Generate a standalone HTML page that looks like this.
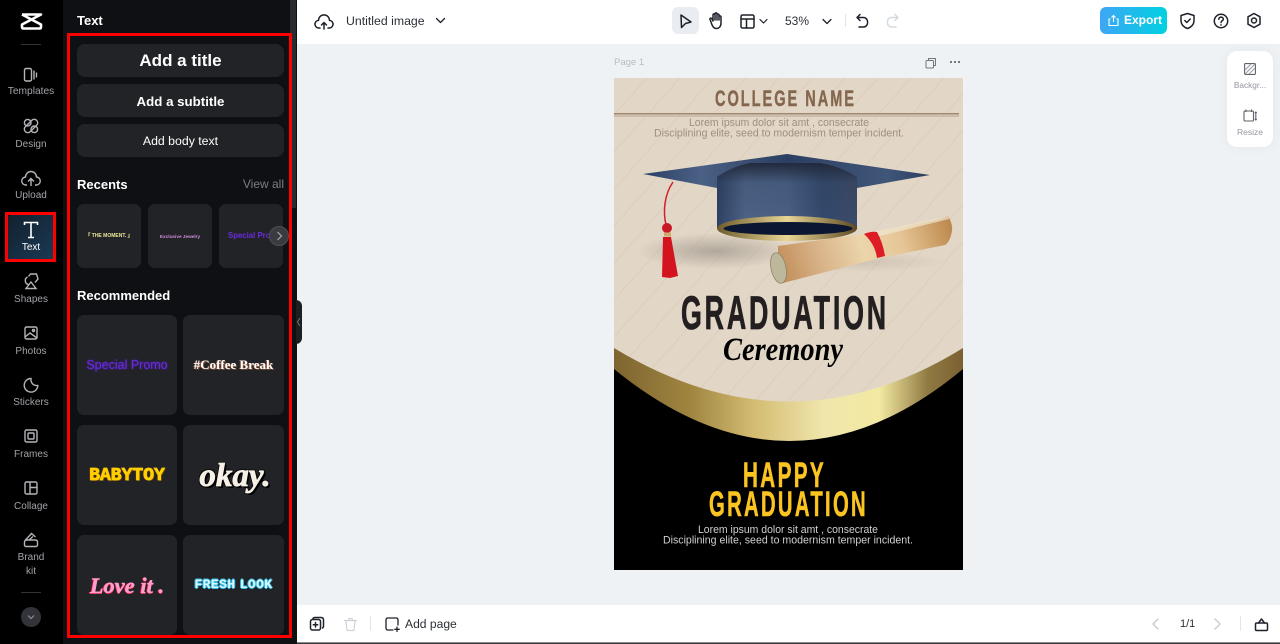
<!DOCTYPE html>
<html><head><meta charset="utf-8"><style>
*{box-sizing:border-box}
html,body{margin:0;padding:0;width:1280px;height:644px;overflow:hidden;background:#eff2f5;font-family:"Liberation Sans",sans-serif}
.a{position:absolute}
#nav{left:0;top:0;width:63px;height:644px;background:#000}
#panel{left:63px;top:0;width:234px;height:644px;background:#0f1013}
.lb{position:absolute;left:0;width:62px;text-align:center;font-size:10px;line-height:13px;color:#a2a3a8}
.ic{position:absolute;left:20px;width:22px;height:22px;fill:none;stroke:#b4b5ba;stroke-width:1.4}
.btn{position:absolute;left:77px;width:207px;height:33px;background:#222327;border-radius:8px;color:#fff;text-align:center;line-height:33px}
.card{position:absolute;background:#222327;border-radius:7px;overflow:hidden;text-align:center;white-space:nowrap}
.h{position:absolute;left:77px;color:#fff;font-weight:bold;font-size:13px;line-height:16px}
.ti{position:absolute;fill:none;stroke:#1d2129;stroke-width:1.5;stroke-linecap:round;stroke-linejoin:round}
</style></head><body>
<div class="a" style="left:0;top:0;width:1280px;height:44px;background:#fff"></div>
<div class="a" style="left:297px;top:605px;width:983px;height:37px;background:#fff"></div>
<div class="a" style="left:0;top:643px;width:1280px;height:1px;background:#3a3a3c"></div>
<div class="a" style="left:297px;top:642px;width:983px;height:1px;background:#8a8a8c"></div>

<div class="a" id="nav">
<svg class="a" style="left:20px;top:12px" width="23" height="19" viewBox="0 0 23 19" fill="none" stroke="#fff" stroke-width="2.6" stroke-linejoin="round"><path d="M2 2.500H21L2 12.500V15Q2 16.500 3.500 16.500H19.500Q21 16.500 21 15V12.500L2 2.500"/></svg>
<div class="a" style="left:21px;top:44px;width:20px;height:1px;background:#333"></div>

<svg class="ic" style="top:64px" viewBox="0 0 22 22"><rect x="4.500" y="4.500" width="7" height="12.500" rx="1.500"/><path d="M14 6.500v9M16.500 8.500v5"/></svg>
<div class="lb" style="top:85px;font-size:10.200px">Templates</div>
<svg class="ic" style="top:115px" viewBox="0 0 22 22"><circle cx="7.700" cy="7.700" r="3.300"/><circle cx="14.300" cy="14.300" r="3.300"/><rect x="3" y="7.500" width="16" height="7" rx="3.500" transform="rotate(-45 11 11)"/></svg>
<div class="lb" style="top:138px">Design</div>
<svg class="ic" style="top:168px" viewBox="0 0 22 22"><path d="M7 17H6a4 4 0 0 1-.5-8 5.500 5.500 0 0 1 11 0 4 4 0 0 1-.5 8h-1M11 18v-7M8 13.500L11 10.500l3 3"/></svg>
<div class="lb" style="top:189px">Upload</div>

<div class="a" style="left:8px;top:215px;width:46px;height:45px;background:linear-gradient(135deg,#13202e,#1a3a55);border-radius:2px"></div>
<svg class="ic" style="top:219px;stroke:#fff;stroke-width:1.600" viewBox="0 0 22 22"><path d="M4.500 6V3.500H17.500V6M11 3.500V18.500M8 18.500H14"/></svg>
<div class="lb" style="top:241px;color:#fff;font-weight:normal">Text</div>
<div class="a" style="left:5px;top:212px;width:51px;height:50px;border:3px solid #f00"></div>

<svg class="ic" style="top:270px" viewBox="0 0 22 22"><path d="M11 12L16 18.500H6Z"/><path d="M8.500 14.500A4 4 0 0 1 7.500 7M8.500 6.500L10.500 4H16.500L18 9L15 12.500"/></svg>
<div class="lb" style="top:293px">Shapes</div>
<svg class="ic" style="top:322px" viewBox="0 0 22 22"><rect x="5" y="5" width="12" height="12" rx="1.500"/><circle cx="13.500" cy="8.500" r="1"/><path d="M5 15L10 11L17 16"/></svg>
<div class="lb" style="top:345px">Photos</div>
<svg class="ic" style="top:374px" viewBox="0 0 22 22"><path d="M11 4.500A6.800 6.800 0 1 0 17.800 11.500C13.500 12 10.500 9 11 4.500Z"/></svg>
<div class="lb" style="top:396px">Stickers</div>
<svg class="ic" style="top:425px" viewBox="0 0 22 22"><rect x="5" y="5" width="12" height="12" rx="1.500"/><rect x="8" y="8" width="6" height="6" rx="1"/></svg>
<div class="lb" style="top:448px">Frames</div>
<svg class="ic" style="top:477px" viewBox="0 0 22 22"><rect x="5" y="5" width="12" height="12" rx="1.500"/><path d="M10 5V17M10 10.500H17"/></svg>
<div class="lb" style="top:500px">Collage</div>
<svg class="ic" style="top:529px" viewBox="0 0 22 22"><path d="M4.500 13A2 2 0 0 1 6.500 11H16A2 2 0 0 1 17.500 13V16A1.500 1.500 0 0 1 16 17.500H6A1.500 1.500 0 0 1 4.500 16ZM5 11.500L11.500 4.500L15.500 8M9 11L13 7.500"/></svg>
<div class="lb" style="top:551px">Brand</div>
<div class="lb" style="top:565px">kit</div>
<div class="a" style="left:21px;top:592px;width:20px;height:1px;background:#333"></div>
<div class="a" style="left:21px;top:607px;width:20px;height:20px;border-radius:50%;background:#33343a"></div>
<svg class="a" style="left:27px;top:614px" width="8" height="6" fill="none" stroke="#8d8e94" stroke-width="1.200"><path d="M1 1.500L4 4.500L7 1.500"/></svg>
</div>

<div class="a" id="panel"></div>
<div class="a" style="left:290px;top:0;width:6px;height:208px;background:#2a2b2e"></div>
<div class="a" style="left:296px;top:300px;width:6px;height:44px;background:#1d1e21;border-radius:0 6px 6px 0"></div>
<svg class="a" style="left:296px;top:316px" width="6" height="12" fill="none" stroke="#777" stroke-width="1"><path d="M4 2L1.500 6L4 10"/></svg>

<div class="h" style="top:13px">Text</div>
<div class="btn" style="top:44px;font-size:17px;font-weight:bold">Add a title</div>
<div class="btn" style="top:84px;font-size:13.300px;font-weight:bold;padding-top:1px">Add a subtitle</div>
<div class="btn" style="top:124px;font-size:12.300px;padding-top:1px">Add body text</div>
<div class="h" style="top:177px">Recents</div>
<div class="a" style="left:224px;width:60px;top:177px;text-align:right;font-size:12px;line-height:15px;color:#7c7d82">View all</div>

<div class="card" style="left:77px;top:204px;width:64px;height:64px;font-size:5px;font-weight:bold;line-height:65px;color:#e8e89a">『 THE MOMENT. 』</div>
<div class="card" style="left:148px;top:204px;width:64px;height:64px;font-size:4.700px;font-weight:bold;line-height:65px;color:#d08ae0">Exclusive Jewelry</div>
<div class="card" style="left:219px;top:204px;width:64px;height:64px;font-size:7.800px;font-weight:bold;line-height:64px;color:#6a2be0;text-align:left;padding-left:9px">Special Promo</div>
<div class="a" style="left:269px;top:226px;width:20px;height:20px;border-radius:50%;background:#3a3b40;border:1px solid #4d4e52"></div>
<svg class="a" style="left:276px;top:231px" width="7" height="10" fill="none" stroke="#a8a9ad" stroke-width="1.200"><path d="M1.500 1L5.500 5L1.500 9"/></svg>

<div class="h" style="top:288px">Recommended</div>
<div class="card" style="left:77px;top:315px;width:100px;height:100px;line-height:100px;font-size:12.500px;color:#6a2be0;text-shadow:0 0 2px #5a22c8">Special Promo</div>
<div class="card" style="left:183px;top:315px;width:101px;height:100px;line-height:100px;font-family:'Liberation Serif',serif;font-weight:bold;font-size:13px;color:#fff;text-shadow:1px 1px 0 #7a4a35,-1px 0 0 #7a4a35">#Coffee Break</div>
<div class="card" style="left:77px;top:425px;width:100px;height:100px;line-height:102px;font-family:'Liberation Mono',monospace;font-weight:bold;font-size:18px;letter-spacing:0;color:#ffcf00;text-shadow:-1px 0 0 #6b3c10,1px 1px 0 #6b3c10;-webkit-text-stroke:.8px #ffcf00">BABYTOY</div>
<div class="card" style="left:183px;top:425px;width:101px;height:100px;line-height:102px;padding-left:3px;font-family:'Liberation Serif',serif;font-style:italic;font-weight:bold;font-size:33px;color:#f6efe6;-webkit-text-stroke:.8px #f6efe6;text-shadow:1px 1px 0 #000,-1px -1px 0 #000,2px 2px 0 #000,-1px 1px 0 #000,1px -1px 0 #000">okay.</div>
<div class="card" style="left:77px;top:535px;width:100px;height:100px;line-height:101px;font-family:'Liberation Serif',serif;font-style:italic;font-weight:bold;font-size:22.500px;color:#ff9dd0;-webkit-text-stroke:.4px #ff9dd0;text-shadow:-1px 0 0 #e0203a,0 1px 0 #e0203a">Love it .</div>
<div class="card" style="left:183px;top:535px;width:101px;height:100px;line-height:100px;font-family:'Liberation Mono',monospace;font-weight:bold;font-size:13px;letter-spacing:.4px;word-spacing:-4px;color:#d8f6fd;text-shadow:1px 0 0 #35bde6,-1px 0 0 #35bde6,0 1px 0 #35bde6,0 -1px 0 #35bde6">FRESH LOOK</div>

<div class="a" style="left:67px;top:33px;width:225px;height:605px;border:3px solid #f00"></div>

<svg class="ti" style="left:313px;top:11px" width="22" height="22" viewBox="0 0 22 22" stroke-width="1.400"><path d="M7 17H6a3.800 3.800 0 0 1-.5-7.600 5.500 5.500 0 0 1 11 0 3.800 3.800 0 0 1-.5 7.600h-1M11 18v-6M8.500 14L11 11.500l2.500 2.500"/></svg>
<div class="a" style="left:346px;top:13px;font-size:12.300px;line-height:16px;color:#2b2f36">Untitled image</div>
<svg class="ti" style="left:435px;top:17px;stroke-width:1.300" width="11" height="8"><path d="M1.500 1.500L5.500 5.500L9.500 1.500"/></svg>

<div class="a" style="left:672px;top:7px;width:27px;height:27px;background:#e9edf1;border-radius:6px"></div>
<svg class="ti" style="left:677px;top:12px" width="17" height="18" viewBox="0 0 17 18"><path d="M4 3L14 10L8.500 11.500L4.500 15.500Z"/></svg>
<svg class="ti" style="left:707px;top:11px" width="18" height="20" viewBox="0 0 18 20" stroke-width="1.300"><path d="M4 11L3 8.500C2.500 7 4.500 6.500 5 8L6 10V4C6 2.500 8 2.500 8 4V3C8 1.500 10 1.500 10 3V4C10 2.800 12 2.800 12 4V5.500C12 4.500 14 4.500 14 6V12C14 15.500 12 17.500 9.500 17.500C7 17.500 5.500 16 4 11ZM8 4V9M10 3.500V9M12 5V9"/></svg>
<svg class="ti" style="left:740px;top:14px" width="15" height="15" viewBox="0 0 15 15"><rect x="1" y="1" width="13" height="13" rx="1.500"/><path d="M1 5H14M6.500 5V14"/></svg>
<svg class="ti" style="left:759px;top:18px;stroke-width:1.200" width="9" height="7"><path d="M1 1.500L4.500 5L8 1.500"/></svg>
<div class="a" style="left:785px;top:13px;font-size:12px;line-height:16px;color:#2b2f36">53%</div>
<svg class="ti" style="left:822px;top:18px;stroke-width:1.300" width="10" height="7"><path d="M1 1.500L5 5.500L9 1.500"/></svg>
<div class="a" style="left:845px;top:14px;width:1px;height:13px;background:#e1e4e8"></div>
<svg class="ti" style="left:855px;top:13px" width="15" height="16" viewBox="0 0 15 16"><path d="M5 1.500L2 4.500L5 7.500M2.500 4.500H8.500C14 4.500 14 14 8.500 14H4"/></svg>
<svg class="ti" style="left:885px;top:13px;stroke:#d5dadf" width="15" height="16" viewBox="0 0 15 16"><path d="M10 1.500L13 4.500L10 7.500M12.500 4.500H6.500C1 4.500 1 14 6.500 14H11"/></svg>

<div class="a" style="left:1100px;top:7px;width:67px;height:27px;border-radius:6px;background:linear-gradient(90deg,#3ea6f6,#00d1e0);color:#fff;font-weight:bold;font-size:12px;line-height:27px;padding-left:24px">Export</div>
<svg class="a" style="left:1107px;top:14px" width="13" height="13" viewBox="0 0 13 13" fill="none" stroke="#fff" stroke-width="1.100"><path d="M3.500 5H2V11.500H11V5H9.500M6.500 8V1.500M4.500 3.500L6.500 1.500L8.500 3.500"/></svg>
<svg class="ti" style="left:1179px;top:12px" width="17" height="18" viewBox="0 0 17 18"><path d="M8.500 1.500L15 3.500V8.500C15 12.500 12 15.500 8.500 16.500C5 15.500 2 12.500 2 8.500V3.500ZM5.800 8.500L7.800 10.500L11.300 7"/></svg>
<svg class="ti" style="left:1213px;top:13px" width="16" height="16" viewBox="0 0 16 16"><circle cx="8" cy="8" r="6.700"/><path d="M5.800 6.200C5.800 3.500 10.300 3.500 10.300 6.200C10.300 7.800 8 7.800 8 9.500M8 11.700V12"/></svg>
<svg class="ti" style="left:1246px;top:12px" width="16" height="18" viewBox="0 0 16 18"><path d="M8 1.500L14 4.800V12.200L8 15.500L2 12.200V4.800Z"/><circle cx="8" cy="8.500" r="2.500"/></svg>

<div class="a" style="left:614px;top:56px;font-size:9.500px;line-height:13px;color:#b7bcc4">Page 1</div>
<svg class="ti" style="left:925px;top:57px;stroke:#70757e;stroke-width:1" width="12" height="12" viewBox="0 0 12 12"><rect x="1" y="3.500" width="7.500" height="7.500" rx="1"/><path d="M3.500 3.500V1.500H10.500V8.500H8.500"/></svg>
<div class="a" style="left:950px;top:61px;width:2px;height:2px;background:#70757e;box-shadow:4px 0 #70757e,8px 0 #70757e"></div>

<div class="a" style="left:1227px;top:51px;width:46px;height:96px;background:#fff;border-radius:10px;box-shadow:0 0 12px rgba(0,0,0,.05)"></div>
<svg class="a" style="left:1244px;top:63px" width="12" height="12" viewBox="0 0 12 12" fill="none" stroke="#5e626c" stroke-width="1.100"><rect x=".6" y=".6" width="10.800" height="10.800" rx="1"/><path d="M1 7L7 1M1 11L11 1M5 11L11 5" stroke="#9a9da5"/></svg>
<div class="a" style="left:1227px;top:80px;width:46px;text-align:center;font-size:8.300px;line-height:11px;color:#92969e">Backgr...</div>
<svg class="a" style="left:1243px;top:109px" width="14" height="14" viewBox="0 0 14 14" fill="none" stroke="#5e626c" stroke-width="1.100"><rect x="1" y="2" width="9.500" height="10" rx="1"/><path d="M3 .5V3M8.500 .5V3M12.800 3V11M11.800 4L12.800 3L13.800 4M11.800 10L12.800 11L13.800 10"/></svg>
<div class="a" style="left:1227px;top:127px;width:46px;text-align:center;font-size:8.500px;line-height:11px;color:#92969e">Resize</div>

<svg class="a" style="left:614px;top:78px" width="349" height="492" viewBox="614 78 349 492">
<defs>
<pattern id="dl" width="33" height="37" patternUnits="userSpaceOnUse" x="614" y="78"><path d="M0 37L33 0" stroke="#dcccb9" stroke-width=".8"/></pattern>
<linearGradient id="gold" x1="0" x2="1" y1="0" y2="0"><stop offset="0" stop-color="#7e6530"/><stop offset=".22" stop-color="#a08540"/><stop offset=".4" stop-color="#d3bc72"/><stop offset=".6" stop-color="#f0e6ac"/><stop offset=".76" stop-color="#f3e9a2"/><stop offset=".9" stop-color="#8f7a42"/><stop offset="1" stop-color="#7b6032"/></linearGradient>
<linearGradient id="sk" x1="0" x2="1" y1="0" y2="0"><stop offset="0" stop-color="#2e4163"/><stop offset=".2" stop-color="#4d6488"/><stop offset=".5" stop-color="#4a6186"/><stop offset=".75" stop-color="#334a6e"/><stop offset="1" stop-color="#3d4b68"/></linearGradient>
<linearGradient id="sktop" x1="0" x2="0" y1="0" y2="1"><stop offset="0" stop-color="#22293c"/><stop offset=".3" stop-color="#22293c" stop-opacity=".15"/><stop offset="1" stop-color="#22293c" stop-opacity="0"/></linearGradient>
<linearGradient id="bd" x1="0" x2="1" y1="0" y2="0"><stop offset="0" stop-color="#2b4064"/><stop offset=".2" stop-color="#4a6084"/><stop offset=".5" stop-color="#2b3f62"/><stop offset=".85" stop-color="#405678"/><stop offset="1" stop-color="#2a3d60"/></linearGradient>
<linearGradient id="rg" x1="0" x2="1" y1="0" y2="0"><stop offset="0" stop-color="#6f5c2c"/><stop offset=".5" stop-color="#e8d595"/><stop offset="1" stop-color="#5d4a22"/></linearGradient>
<linearGradient id="sc" x1="778" y1="280" x2="950" y2="225" gradientUnits="userSpaceOnUse"><stop offset="0" stop-color="#bf8a54"/><stop offset=".25" stop-color="#d8b288"/><stop offset=".5" stop-color="#ecd5ab"/><stop offset=".72" stop-color="#e6c596"/><stop offset="1" stop-color="#bd8a4e"/></linearGradient>
<radialGradient id="sh"><stop offset="0" stop-color="#8f8a80" stop-opacity=".6"/><stop offset="1" stop-color="#8f8a80" stop-opacity="0"/></radialGradient>
</defs>
<rect x="614" y="78" width="349" height="492" fill="#e2d6c6"/>
<rect x="614" y="78" width="349" height="340" fill="url(#dl)"/>
<text x="715" y="106" font-family="Liberation Sans Narrow,Liberation Sans,sans-serif" font-weight="bold" font-size="22" fill="#85674f" stroke="#85674f" stroke-width=".4" letter-spacing="3" textLength="141" lengthAdjust="spacingAndGlyphs">COLLEGE NAME</text>
<rect x="614" y="113" width="345" height="1.500" fill="#a08670"/><rect x="614" y="115.500" width="345" height="1" fill="#b8a18c"/>
<text x="689" y="126" font-family="Liberation Sans,sans-serif" font-size="11.300" fill="#a08e7e" textLength="180" lengthAdjust="spacingAndGlyphs">Lorem ipsum dolor sit amt , consecrate</text>
<text x="654" y="136.500" font-family="Liberation Sans,sans-serif" font-size="11.300" fill="#a08e7e" textLength="250" lengthAdjust="spacingAndGlyphs">Disciplining elite, seed to modernism temper incident.</text>

<ellipse cx="715" cy="251" rx="78" ry="18" fill="url(#sh)"/>
<ellipse cx="860" cy="262" rx="85" ry="10" fill="url(#sh)" opacity=".4"/>
<path d="M643 174L787 154L930 175L857 188H717Z" fill="url(#bd)"/>
<path d="M673 182C664 195 663 212 666 225" fill="none" stroke="#d0202a" stroke-width="1.500"/>
<path d="M717 177Q733 166 750 163H820Q840 166 857 177V229H717Z" fill="url(#sk)"/>
<path d="M717 177Q733 166 750 163H820Q840 166 857 177V229H717Z" fill="url(#sktop)"/>
<ellipse cx="787" cy="228.500" rx="70" ry="12.500" fill="url(#rg)"/>
<ellipse cx="788" cy="228.500" rx="64.500" ry="6.500" fill="#0a1632"/>
<circle cx="667" cy="228" r="5" fill="#c71a28"/>
<rect x="664" y="232.500" width="7" height="4" fill="#cfa96a"/>
<path d="M663 237H671L678 276L670 278L662 277Z" fill="#d3141f"/>
<path d="M778 246L870 233L935 220Q945 217 948 216Q953 224 952 231Q950 242 945 245L880 258L783 283L778 268Z" fill="url(#sc)"/>
<path d="M868 233L935 219Q945 217 948 216L949 219L880 236Z" fill="#f1e8d2" opacity=".7"/>
<path d="M864 234Q871 231 877 232Q883 243 885 256L877 258Q875 244 864 234Z" fill="#dd1c26"/>
<ellipse cx="778.500" cy="268" rx="7.500" ry="15.500" transform="rotate(-12 778.500 268)" fill="#bdb79c" stroke="#8e8567" stroke-width=".8"/>

<text x="681" y="329" font-family="Liberation Sans Narrow,Liberation Sans,sans-serif" font-weight="bold" font-size="47" fill="#231f20" stroke="#231f20" stroke-width=".8" letter-spacing="5" textLength="208" lengthAdjust="spacingAndGlyphs">GRADUATION</text>
<text x="723" y="360" font-family="Liberation Serif,serif" font-style="italic" font-weight="bold" font-size="33" fill="#000" textLength="120" lengthAdjust="spacingAndGlyphs">Ceremony</text>

<path d="M614 348Q790 455 963 348V570H614Z" fill="url(#gold)"/>
<path d="M614 369Q790 513 963 369V570H614Z" fill="#000"/>

<text x="743" y="487" font-family="Liberation Sans Narrow,Liberation Sans,sans-serif" font-weight="bold" font-size="35" fill="#fcc421" stroke="#fcc421" stroke-width=".6" letter-spacing="4" textLength="83" lengthAdjust="spacingAndGlyphs">HAPPY</text>
<text x="709" y="516" font-family="Liberation Sans Narrow,Liberation Sans,sans-serif" font-weight="bold" font-size="35" fill="#fcc421" stroke="#fcc421" stroke-width=".6" letter-spacing="4" textLength="159" lengthAdjust="spacingAndGlyphs">GRADUATION</text>
<text x="698" y="533" font-family="Liberation Sans,sans-serif" font-size="11.300" fill="#cfcfcf" textLength="180" lengthAdjust="spacingAndGlyphs">Lorem ipsum dolor sit amt , consecrate</text>
<text x="663" y="543.500" font-family="Liberation Sans,sans-serif" font-size="11.300" fill="#cfcfcf" textLength="250" lengthAdjust="spacingAndGlyphs">Disciplining elite, seed to modernism temper incident.</text>
</svg>

<svg class="ti" style="left:309px;top:616px" width="16" height="16" viewBox="0 0 16 16" stroke-width="1.300"><rect x="1.500" y="3.500" width="10" height="10.500" rx="2"/><path d="M4 2.500Q4.500 1.500 6 1.500H12Q14.500 1.500 14.500 4V10Q14.500 11.500 13.500 12M6.500 6.500V11M4.300 8.700H8.700"/></svg>
<svg class="ti" style="left:343px;top:617px;stroke:#ced3da;stroke-width:1.200" width="15" height="15" viewBox="0 0 15 15"><path d="M1.500 3.500H13.500M5.500 3.500L6 1.500H9L9.500 3.500M3 3.500L4 13.500H11L12 3.500"/></svg>
<div class="a" style="left:370px;top:616px;width:1px;height:15px;background:#e1e4e8"></div>
<svg class="ti" style="left:385px;top:617px;stroke-width:1.300" width="15" height="15" viewBox="0 0 15 15"><path d="M8 13H3Q1 13 1 11V3Q1 1 3 1H11Q13 1 13 3V8M12 10V14.500M9.800 12.300H14.300"/></svg>
<div class="a" style="left:405px;top:616px;font-size:12.100px;line-height:16px;color:#2b2f36">Add page</div>

<svg class="ti" style="left:1151px;top:617px;stroke:#c9ced5" width="9" height="14"><path d="M7 2L2 7L7 12"/></svg>
<div class="a" style="left:1180px;top:616px;font-size:11px;line-height:16px;color:#2b2f36">1/1</div>
<svg class="ti" style="left:1213px;top:617px;stroke:#c9ced5" width="9" height="14"><path d="M2 2L7 7L2 12"/></svg>
<div class="a" style="left:1240px;top:616px;width:1px;height:15px;background:#e1e4e8"></div>
<svg class="ti" style="left:1254px;top:617px" width="15" height="15" viewBox="0 0 15 15"><rect x="1.500" y="6" width="12" height="7.500" rx="1.200"/><path d="M4.500 6L7.500 2L10.500 6"/></svg>
</body></html>
